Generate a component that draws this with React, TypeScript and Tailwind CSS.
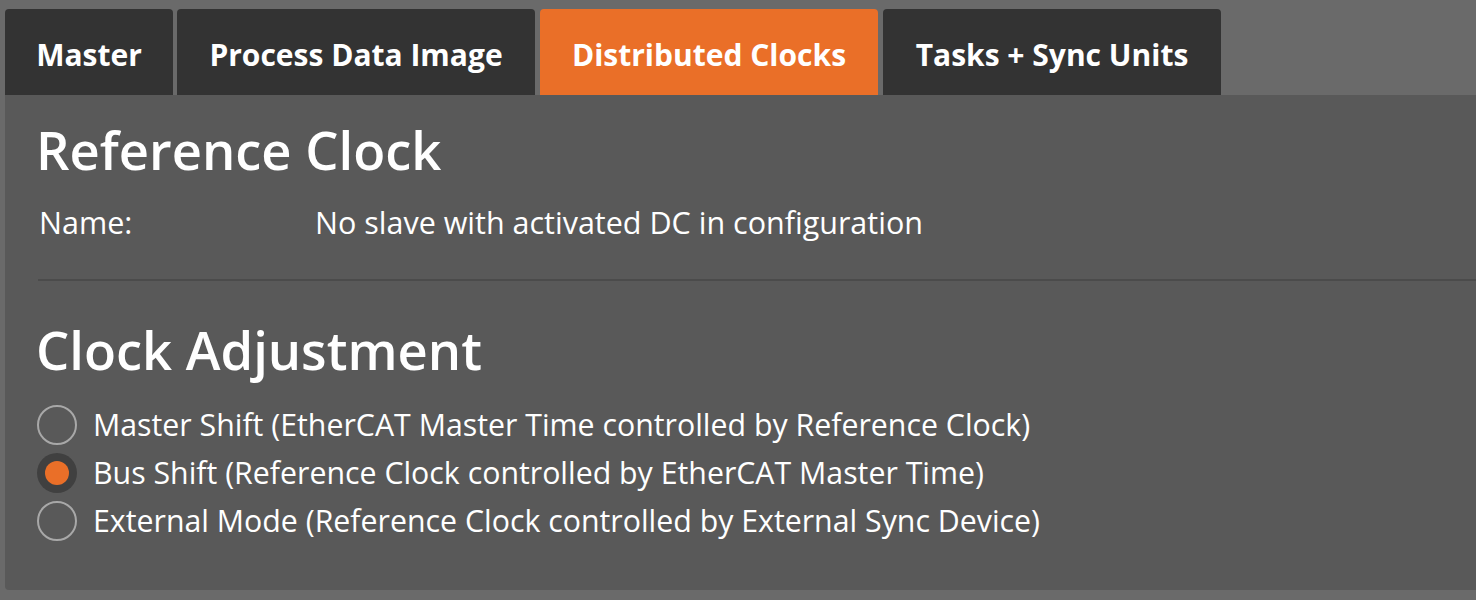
import React from "react";

const tabs = [
  { label: "Master", w: "w-[168px]", active: false },
  { label: "Process Data Image", w: "w-[358px]", active: false },
  { label: "Distributed Clocks", w: "w-[338px]", active: true },
  { label: "Tasks + Sync Units", w: "w-[338px]", active: false },
];

const options = [
  { label: "Master Shift (EtherCAT Master Time controlled by Reference Clock)", checked: false },
  { label: "Bus Shift (Reference Clock controlled by EtherCAT Master Time)", checked: true },
  { label: "External Mode (Reference Clock controlled by External Sync Device)", checked: false },
];

export default function App() {
  return (
    <div
      className="h-[600px] w-full bg-[#6a6a6a] pt-[9px] pl-[5px] overflow-hidden text-white"
      style={{ fontFamily: '"Open Sans", "Noto Sans", sans-serif' }}
    >
      <div className="flex h-[86px] gap-[4px]">
        {tabs.map((t, i) => (
          <div
            key={t.label}
            className={`${t.w} ${i > 1 ? "ml-[1px]" : ""} flex items-center justify-center pt-[5px] rounded-t-[4px] text-[30px] font-bold ${
              t.active ? "bg-[#ea6f28]" : "bg-[#333333]"
            }`}
          >
            {t.label}
          </div>
        ))}
      </div>
      <div className="h-[495px] bg-[#595959] rounded-bl-[4px] pl-[32px]">
        <div className="pt-[23px] text-[52.5px] font-semibold leading-[64px] -ml-[1px]">Reference Clock</div>
        <div className="flex mt-[20px] text-[30.5px] leading-[40px] pl-[2px]">
          <div className="w-[276px]">Name:</div>
          <div>No slave with activated DC in configuration</div>
        </div>
        <div className="mt-[37px] h-[2px] ml-[1px] bg-[#4b4b4b]" />
        <div className="mt-[37px] text-[52.5px] font-semibold leading-[64px] -ml-[1px]">Clock Adjustment</div>
        <div className="mt-[19px] flex flex-col">
          {options.map((o) => (
            <div key={o.label} className="flex items-center h-[48px] gap-[16px]">
              {o.checked ? (
                <div className="w-[40px] h-[40px] rounded-full bg-[#404040] flex items-center justify-center">
                  <div className="w-[24px] h-[24px] rounded-full bg-[#ea6f28]" />
                </div>
              ) : (
                <div className="w-[40px] h-[40px] rounded-full border-[2px] border-[#a8a8a8]" />
              )}
              <div className="text-[30.3px] leading-[40px]">{o.label}</div>
            </div>
          ))}
        </div>
      </div>
    </div>
  );
}
